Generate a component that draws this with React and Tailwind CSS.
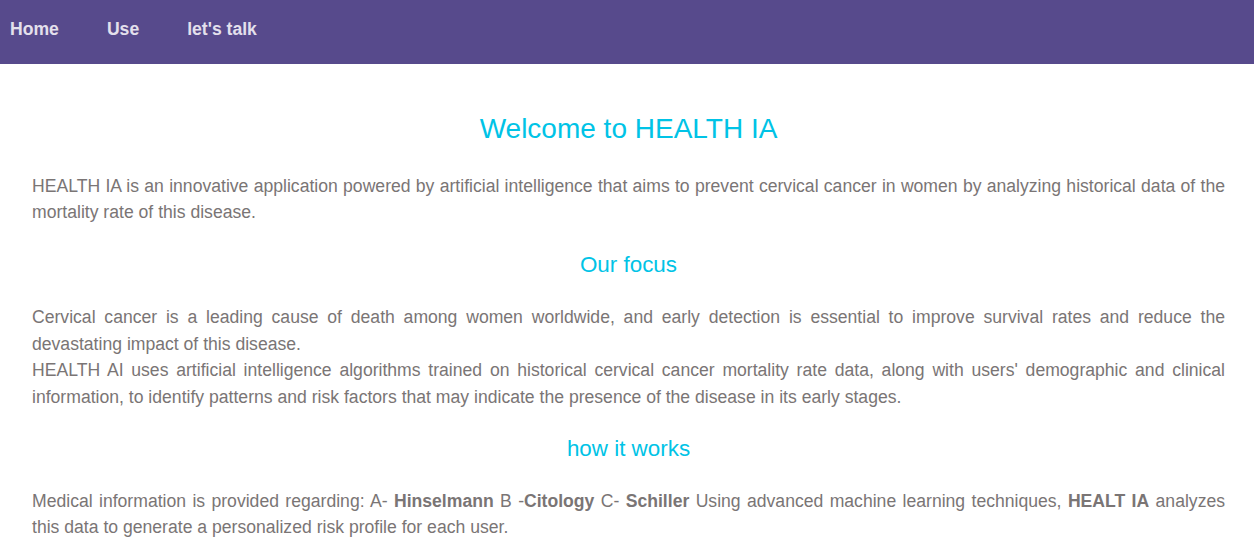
import React from 'react';

// Landing page for HEALTH IA: top nav plus a centred intro section.
const links = ['Home', 'Use', "let's talk"];

function Nav() {
  return (
    <nav className="h-16 bg-[#574a8c] flex items-center pl-[10px] gap-[48px]">
      {links.map(link => (
        <a key={link} href="#" className="text-[17.6px] font-bold text-[#e4e0ec] leading-none -mt-[5px]">
          {link}
        </a>
      ))}
    </nav>
  );
}

function App() {
  return (
    <div className="min-h-screen bg-white font-['Liberation_Sans',Arial,sans-serif]">
      <Nav />

      <main className="pl-[32px] pr-[29px] text-[17.6px] leading-[26.4px] text-[#7a7575]">
        {/* Intro */}
        <h1 className="mt-[48px] mb-[27px] text-center text-[28px] leading-[33.6px] text-[#00c3e6]">
          Welcome to HEALTH IA
        </h1>
        <p className="text-justify">
          HEALTH IA is an innovative application powered by artificial intelligence that aims to prevent cervical cancer in women by analyzing historical data of the mortality rate of this disease.
        </p>

        {/* Focus */}
        <h2 className="mt-[26px] mb-[26px] text-center text-[22.4px] leading-[27px] text-[#00c3e6]">
          Our focus
        </h2>
        <p className="text-justify">
          Cervical cancer is a leading cause of death among women worldwide, and early detection is essential to improve survival rates and reduce the devastating impact of this disease.
        </p>
        <p className="text-justify">
          HEALTH AI uses artificial intelligence algorithms trained on historical cervical cancer mortality rate data, along with users' demographic and clinical information, to identify patterns and risk factors that may indicate the presence of the disease in its early stages.
        </p>

        {/* How it works */}
        <h2 className="mt-[25px] mb-[26px] text-center text-[22.4px] leading-[27px] text-[#00c3e6]">
          how it works
        </h2>
        <p className="text-justify">
          Medical information is provided regarding: A- <b>Hinselmann</b> B -<b>Citology</b> C- <b>Schiller</b> Using advanced machine learning techniques, <b>HEALT IA</b> analyzes this data to generate a personalized risk profile for each user.
        </p>
      </main>
    </div>
  );
}

export default App;
